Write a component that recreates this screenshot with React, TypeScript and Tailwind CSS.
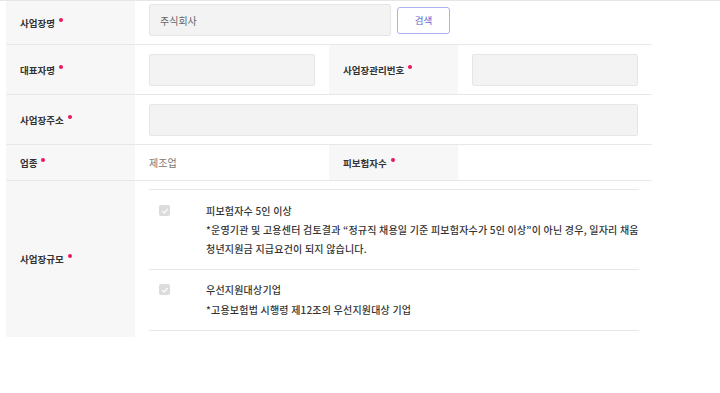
import React from "react";

const font = { fontFamily: '"Noto Sans CJK KR", "Noto Sans", sans-serif' };

function Dot() {
  return <span className="ml-[4px] mt-[1px] inline-block h-[4px] w-[4px] self-start rounded-full bg-[#e8185c]" />;
}

function Label({ text, className = "" }: { text: string; className?: string }) {
  return (
    <div className={`flex w-[129px] shrink-0 items-center bg-[#f7f7f7] px-[14px] ${className}`}>
      <span className="flex items-start text-[9.5px] font-semibold leading-[12px] text-[#333]">
        {text}
        <Dot />
      </span>
    </div>
  );
}

function Field({ className = "" }: { className?: string }) {
  return <div className={`h-[32px] rounded-[2px] border border-[#e6e6e6] bg-[#f3f3f3] ${className}`} />;
}

function CheckBox() {
  return (
    <div className="flex h-[19px] w-[57px] shrink-0 items-center pl-[10px]">
      <div className="flex h-[11px] w-[11px] items-center justify-center rounded-[2px] bg-[#dcdcdc]">
        <svg width="8" height="8" viewBox="0 0 8 8">
          <path d="M1.3 4.2 L3.2 6 L6.7 2" fill="none" stroke="#fff" strokeWidth="1.2" />
        </svg>
      </div>
    </div>
  );
}

export default function App() {
  return (
    <div className="h-[393px] w-[720px] bg-white" style={font}>
      <div className="h-[1px] w-full bg-[#e6e6e6]" />
      <div className="ml-[6px] w-[646px]">
        {/* 사업장명 */}
        <div className="flex h-[44px] border-b border-[#e8e8e8]">
          <Label text="사업장명" />
          <div className="flex flex-1 items-start gap-[6px] px-[14px] pt-[3px]">
            <div className="flex h-[32px] w-[242px] items-center rounded-[2px] border border-[#e6e6e6] bg-[#f3f3f3] px-[10px] text-[10px] text-[#666]">
              주식회사
            </div>
            <button className="mt-[3px] h-[27px] w-[53px] rounded-[3px] border border-[#aab1ee] bg-white text-[9.5px] text-[#5b6ad2]">
              검색
            </button>
          </div>
        </div>

        {/* 대표자명 / 사업장관리번호 */}
        <div className="flex h-[50px] border-b border-[#e8e8e8]">
          <Label text="대표자명" />
          <div className="flex w-[194px] items-center px-[14px]">
            <Field className="w-full" />
          </div>
          <Label text="사업장관리번호" />
          <div className="flex flex-1 items-center px-[14px]">
            <Field className="w-full" />
          </div>
        </div>

        {/* 사업장주소 */}
        <div className="flex h-[50px] border-b border-[#e8e8e8]">
          <Label text="사업장주소" />
          <div className="flex flex-1 items-center px-[14px]">
            <Field className="w-full" />
          </div>
        </div>

        {/* 업종 / 피보험자수 */}
        <div className="flex h-[36px] border-b border-[#e8e8e8]">
          <Label text="업종" />
          <div className="flex w-[194px] items-center px-[14px] text-[10px] text-[#777]">제조업</div>
          <Label text="피보험자수" />
          <div className="flex-1" />
        </div>

        {/* 사업장규모 */}
        <div className="flex h-[156px]">
          <Label text="사업장규모" />
          <div className="flex-1 px-[14px] pt-[8px]">
            <div className="border-t border-[#e8e8e8]">
              <div className="flex border-b border-[#e8e8e8] py-[11px]">
                <CheckBox />
                <div className="text-[10px] font-medium leading-[19px] tracking-[0.2px] text-[#333] whitespace-nowrap">
                  <div>피보험자수 5인 이상</div>
                  <div>*운영기관 및 고용센터 검토결과 “정규직 채용일 기준 피보험자수가 5인 이상”이 아닌 경우, 일자리 채움</div>
                  <div>청년지원금 지급요건이 되지 않습니다.</div>
                </div>
              </div>
              <div className="flex border-b border-[#e8e8e8] py-[10px]">
                <CheckBox />
                <div className="text-[10px] font-medium leading-[20px] tracking-[0.2px] text-[#333] whitespace-nowrap">
                  <div>우선지원대상기업</div>
                  <div>*고용보험법 시행령 제12조의 우선지원대상 기업</div>
                </div>
              </div>
            </div>
          </div>
        </div>
      </div>
    </div>
  );
}
